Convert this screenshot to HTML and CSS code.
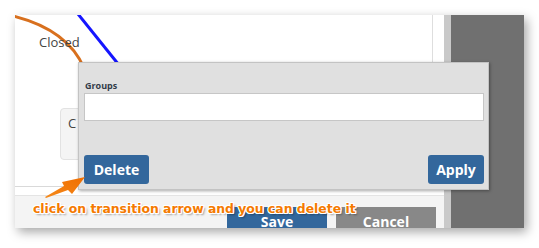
FILE: index.html
```html
<!DOCTYPE html>
<html>
<head>
<meta charset="utf-8">
<link rel="stylesheet" href="styles.css">
</head>
<body>
<div class="frame">
  <div class="main">
    <div class="canvas-wrap">
      <div class="canvas">
        <svg class="lines" width="418" height="171" viewBox="0 0 418 171">
          <path d="M-2,1 C30,9 57,25 69,53" fill="none" stroke="#d8701e" stroke-width="3"/>
          <path d="M63,-1 L112,60" fill="none" stroke="#1515ff" stroke-width="3"/>
        </svg>
        <div class="state-label">Closed</div>
        <div class="state-box">C</div>
      </div>
    </div>
    <div class="gap-row"></div>
    <div class="footer">
      <button class="btn btn-save">Save</button>
      <button class="btn btn-cancel">Cancel</button>
    </div>
  </div>
  <div class="strip"></div>
  <div class="side"></div>

  <div class="dialog">
    <label class="field-label">Groups</label>
    <div class="field-input"></div>
    <div class="dialog-actions">
      <button class="btn btn-primary btn-delete">Delete</button>
      <button class="btn btn-primary btn-apply">Apply</button>
    </div>
  </div>

  <svg class="arrow" width="509" height="213" viewBox="0 0 509 213">
    <defs>
      <linearGradient id="ag" x1="0" y1="1" x2="1" y2="0">
        <stop offset="0" stop-color="#f58a1c"/>
        <stop offset="1" stop-color="#f06e00"/>
      </linearGradient>
    </defs>
    <polygon points="30,182 49,171 47,167 70,162 57,179 53,175 31,183" fill="url(#ag)"/>
  </svg>
  <div class="note">click on transition arrow and you can delete it</div>
</div>
</body>
</html>
```
FILE: styles.css
```css
html, body {
  margin: 0;
  padding: 0;
  background: #ffffff;
}
body {
  width: 539px;
  height: 248px;
  overflow: hidden;
  font-family: "Open Sans", "DejaVu Sans", sans-serif;
}
.frame {
  position: relative;
  margin: 15px 0 0 15px;
  width: 509px;
  height: 213px;
  display: grid;
  grid-template-columns: 429px 7px 73px;
  box-shadow: 3px 4px 10px rgba(0, 0, 0, 0.35);
  overflow: visible;
}
.main {
  display: flex;
  flex-direction: column;
  background: #ffffff;
  overflow: hidden;
}
.canvas-wrap {
  height: 171px;
  border-bottom: 1px solid #d9d9d9;
  flex: none;
}
.canvas {
  position: relative;
  width: 418px;
  height: 171px;
  border-right: 1px solid #dedede;
  box-sizing: border-box;
  overflow: hidden;
}
.lines {
  position: absolute;
  left: 0;
  top: 0;
}
.state-label {
  position: absolute;
  left: 24px;
  top: 18px;
  font-size: 13px;
  color: #444;
}
.state-box {
  position: absolute;
  left: 45px;
  top: 93px;
  width: 70px;
  height: 52px;
  box-sizing: border-box;
  background: #f4f4f4;
  border: 1px solid #e2e2e2;
  border-radius: 4px;
  padding: 5px 0 0 7px;
  font-size: 13px;
  color: #444;
}
.gap-row {
  height: 8px;
  border-bottom: 1px solid #e4e4e4;
  flex: none;
}
.footer {
  flex: 1;
  background: #f4f4f4;
  display: flex;
  gap: 9px;
  padding: 11px 0 0 212px;
}
.btn {
  border: 0;
  margin: 0;
  font-family: "Open Sans", "DejaVu Sans", sans-serif;
  font-weight: 700;
  font-size: 14px;
  color: #ffffff;
  border-radius: 3px;
  cursor: pointer;
}
.btn-save, .btn-cancel {
  width: 100px;
  height: 30px;
  padding: 0;
  line-height: 30px;
  flex: none;
  border-radius: 0;
}
.btn-save { background: #33679c; }
.btn-cancel { background: #888888; }
.strip { background: #c9c9c9; }
.side { background: #707070; }

.dialog {
  position: absolute;
  left: 63px;
  top: 47px;
  width: 411px;
  height: 128px;
  box-sizing: border-box;
  background: #e0e0e0;
  border: 1px solid #c3c3c3;
  box-shadow: 1px 1px 3px rgba(0, 0, 0, 0.35);
  padding: 17px 4px 5px 5px;
  display: flex;
  flex-direction: column;
}
.field-label {
  font-size: 9px;
  font-weight: 700;
  color: #333d4a;
  line-height: 12px;
  padding-left: 1px;
  margin-bottom: 1px;
}
.field-input {
  height: 28px;
  box-sizing: border-box;
  background: #ffffff;
  border: 1px solid #c6c6c6;
}
.dialog-actions {
  margin-top: auto;
  display: flex;
  justify-content: space-between;
}
.btn-primary {
  background: #33679c;
  height: 29px;
  padding: 0;
  line-height: 29px;
  text-align: center;
}
.btn-delete { width: 65px; }
.btn-apply { width: 56px; }
.arrow {
  position: absolute;
  left: 0;
  top: 0;
  pointer-events: none;
}
.note {
  position: absolute;
  left: 18px;
  top: 186px;
  font-family: "DejaVu Sans", Verdana, sans-serif;
  font-weight: 700;
  font-size: 12.4px;
  color: #f57a00;
  white-space: nowrap;
  text-shadow:
    1px 0 0 #fff, -1px 0 0 #fff, 0 1px 0 #fff, 0 -1px 0 #fff,
    1px 1px 0 #fff, -1px -1px 0 #fff, 1px -1px 0 #fff, -1px 1px 0 #fff,
    2px 2px 2px rgba(0, 0, 0, 0.35);
}
```
